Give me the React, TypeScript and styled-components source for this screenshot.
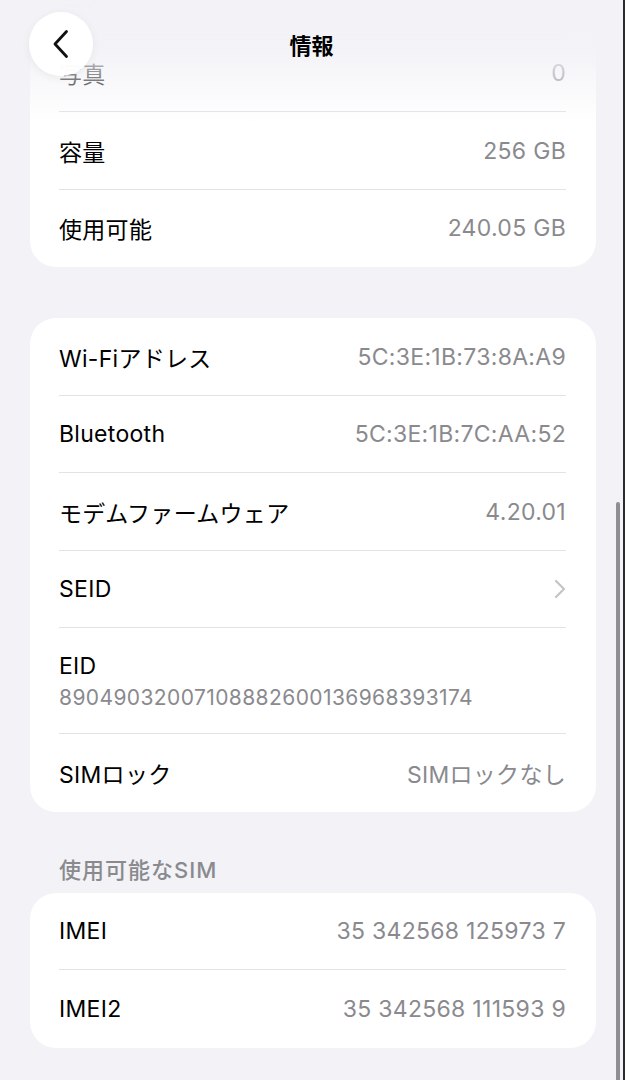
import React from 'react'
import styled, { createGlobalStyle } from 'styled-components'

const GlobalStyle = createGlobalStyle`
  * { box-sizing: border-box; }
  html, body { margin: 0; padding: 0; background: #f2f2f7; }
  body {
    font-family: Inter, "Noto Sans CJK JP", "Noto Sans", sans-serif;
    -webkit-font-smoothing: antialiased;
  }
`

const Screen = styled.div`
  position: relative;
  width: 625px;
  height: 1080px;
  overflow: hidden;
  background: #f2f2f7;
  border-right: 2px solid #2b2b2e;
`

const Content = styled.div`
  display: flex;
  flex-direction: column;
  padding: 0 27px 0 30px;
  margin-top: -43px;
`

const Card = styled.div<{ gapAfter?: number }>`
  background: #ffffff;
  border-radius: 26px;
  overflow: hidden;
  margin-bottom: ${({ gapAfter }) => gapAfter ?? 0}px;
`

const Row = styled.div<{ last?: boolean }>`
  position: relative;
  display: flex;
  align-items: center;
  justify-content: space-between;
  height: 77.5px;
  padding: 0 30px 0 29px;

  &::after {
    content: '';
    display: ${({ last }) => (last ? 'none' : 'block')};
    position: absolute;
    left: 29px;
    right: 30px;
    bottom: 0;
    height: 1px;
    background: #e3e3e6;
  }
`

const StackRow = styled(Row)`
  flex-direction: column;
  align-items: flex-start;
  justify-content: center;
  gap: 5px;
  height: 106px;
`

const Label = styled.span`
  font-size: 23px;
  color: #000000;
  letter-spacing: 0.3px;
  white-space: nowrap;
`

const Value = styled.span<{ small?: boolean }>`
  font-size: ${({ small }) => (small ? 21 : 23)}px;
  color: #8a8a8e;
  letter-spacing: ${({ small }) => (small ? 0.4 : 0.3)}px;
  white-space: nowrap;
`

const SectionTitle = styled.div`
  font-size: 22px;
  font-weight: 500;
  color: #8a8a8e;
  letter-spacing: 1px;
  padding: 0 29px;
  height: 30px;
  line-height: 30px;
  margin-bottom: 8px;
`

const Header = styled.div`
  position: absolute;
  top: 0;
  left: 0;
  right: 0;
  height: 124px;
  background: linear-gradient(
    to bottom,
    rgba(242, 242, 247, 1) 0%,
    rgba(242, 242, 247, 0.95) 38%,
    rgba(242, 242, 247, 0.55) 62%,
    rgba(242, 242, 247, 0) 100%
  );
`

const HeaderBar = styled.div`
  display: flex;
  align-items: center;
  justify-content: center;
  height: 88px;
  position: relative;
`

const BackButton = styled.div`
  position: absolute;
  left: 29px;
  top: 12px;
  width: 64px;
  height: 64px;
  border-radius: 50%;
  background: rgba(255, 255, 255, 0.96);
  box-shadow: 0 2px 10px rgba(0, 0, 0, 0.06);
  display: flex;
  align-items: center;
  justify-content: center;
`

const Title = styled.div`
  font-size: 22px;
  font-weight: 700;
  color: #000000;
`

const ScrollThumb = styled.div`
  position: absolute;
  right: 3px;
  top: 502px;
  bottom: -10px;
  width: 4px;
  border-radius: 2px;
  background: #8e8e93;
`

interface Item {
  label: string
  value?: string
}

const storage: Item[] = [
  { label: 'ビデオ', value: '0' },
  { label: '写真', value: '0' },
  { label: '容量', value: '256 GB' },
  { label: '使用可能', value: '240.05 GB' },
]

const sims: Item[] = [
  { label: 'IMEI', value: '35 342568 125973 7' },
  { label: 'IMEI2', value: '35 342568 111593 9' },
]

const Chevron = () => (
  <svg width="12" height="20" viewBox="0 0 12 20" fill="none">
    <path d="M2 2l8 8-8 8" stroke="#c4c4c8" strokeWidth="2.2" strokeLinecap="round" strokeLinejoin="round" />
  </svg>
)

const BackIcon = () => (
  <svg width="18" height="30" viewBox="0 0 18 30" fill="none">
    <path d="M14.5 2.5L3 15l11.5 12.5" stroke="#111" strokeWidth="2.8" strokeLinecap="round" strokeLinejoin="round" />
  </svg>
)

const App: React.FC = () => {
  return (
    <Screen>
      <GlobalStyle />
      <Content>
        <Card gapAfter={51}>
          {storage.map((item, i) => (
            <Row key={item.label} last={i === storage.length - 1}>
              <Label>{item.label}</Label>
              <Value>{item.value}</Value>
            </Row>
          ))}
        </Card>

        <Card gapAfter={43}>
          <Row>
            <Label>Wi-Fiアドレス</Label>
            <Value>5C:3E:1B:73:8A:A9</Value>
          </Row>
          <Row>
            <Label>Bluetooth</Label>
            <Value>5C:3E:1B:7C:AA:52</Value>
          </Row>
          <Row>
            <Label>モデムファームウェア</Label>
            <Value>4.20.01</Value>
          </Row>
          <Row>
            <Label>SEID</Label>
            <Chevron />
          </Row>
          <StackRow>
            <Label>EID</Label>
            <Value small>89049032007108882600136968393174</Value>
          </StackRow>
          <Row last>
            <Label>SIMロック</Label>
            <Value>SIMロックなし</Value>
          </Row>
        </Card>

        <SectionTitle>使用可能なSIM</SectionTitle>
        <Card>
          {sims.map((item, i) => (
            <Row key={item.label} last={i === sims.length - 1}>
              <Label>{item.label}</Label>
              <Value>{item.value}</Value>
            </Row>
          ))}
        </Card>
      </Content>

      <Header>
        <HeaderBar>
          <BackButton>
            <BackIcon />
          </BackButton>
          <Title>情報</Title>
        </HeaderBar>
      </Header>
      <ScrollThumb />
    </Screen>
  )
}

export default App
